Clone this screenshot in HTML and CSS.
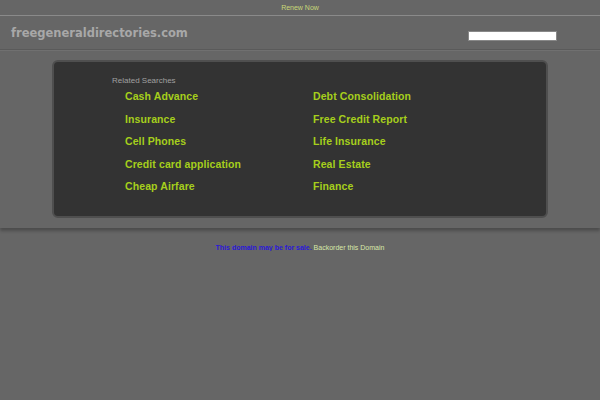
FILE: index.html
```html
<!DOCTYPE html>
<html>
<head>
<meta charset="utf-8">
<link rel="stylesheet" href="styles.css">
</head>
<body>
<div class="topbar"><a class="renew" href="#">Renew Now</a></div>
<div class="header">
  <div class="domain">freegeneraldirectories.com</div>
  <div class="search"><input class="search-input" type="text"></div>
</div>
<div class="main">
  <div class="box">
    <div class="related">Related Searches</div>
    <div class="cols">
      <ul class="col">
        <li><a href="#">Cash Advance</a></li>
        <li><a href="#">Insurance</a></li>
        <li><a href="#">Cell Phones</a></li>
        <li><a href="#">Credit card application</a></li>
        <li><a href="#">Cheap Airfare</a></li>
      </ul>
      <ul class="col">
        <li><a href="#">Debt Consolidation</a></li>
        <li><a href="#">Free Credit Report</a></li>
        <li><a href="#">Life Insurance</a></li>
        <li><a href="#">Real Estate</a></li>
        <li><a href="#">Finance</a></li>
      </ul>
    </div>
  </div>
</div>
<div class="footer"><span class="sale">This domain may be for sale.</span> <a class="backorder" href="#">Backorder this Domain</a></div>
</body>
</html>
```
FILE: styles.css
```css
html, body {
  margin: 0;
  padding: 0;
  background: #666666;
  font-family: "Liberation Sans", Arial, sans-serif;
}
.topbar {
  height: 15px;
  line-height: 15px;
  text-align: center;
  font-size: 7px;
  border-bottom: 1px solid #8a8a8a;
}
.renew {
  color: #c8d878;
  text-decoration: none;
}
.header {
  height: 33px;
  display: flex;
  justify-content: space-between;
  align-items: flex-start;
  border-bottom: 1px solid #5a5a5a;
}
.domain {
  font-family: "DejaVu Sans", Verdana, sans-serif;
  font-weight: bold;
  font-size: 11.5px;
  color: #a8a8a8;
  margin: 10px 0 0 11px;
}
.search {
  margin: 15px 43px 0 0;
}
.search-input {
  display: block;
  width: 87px;
  height: 8px;
  padding: 0;
  border: 1px solid #888;
  background: #fff;
}
.main {
  padding: 9px 52px 10px;
  box-shadow: 0 3px 3px rgba(0,0,0,0.25);
  border-top: 1px solid #707070;
}
.box {
  background: #333333;
  border: 2px solid #4f4f4f;
  border-radius: 6px;
  padding: 15px 0 0 58px;
  box-sizing: border-box;
  height: 158px;
}
.related {
  font-size: 8px;
  color: #a0a0a0;
  margin-top: -1px;
}
.cols {
  display: flex;
  margin: -1px 0 0 13px;
}
.col {
  list-style: none;
  margin: 0;
  padding: 0;
  width: 188px;
}
.col li {
  height: 22.5px;
  line-height: 22.5px;
}
.col a {
  color: #a6cf1c;
  font-weight: bold;
  font-size: 10.5px;
  letter-spacing: 0.1px;
  text-decoration: none;
}
.footer {
  text-align: center;
  font-size: 7px;
  margin-top: 16px;
}
.sale {
  color: #2a18d8;
  font-weight: bold;
}
.backorder {
  color: #d8e8a8;
  text-decoration: none;
  border-bottom: 1px solid #d8e8a8;
}
```
